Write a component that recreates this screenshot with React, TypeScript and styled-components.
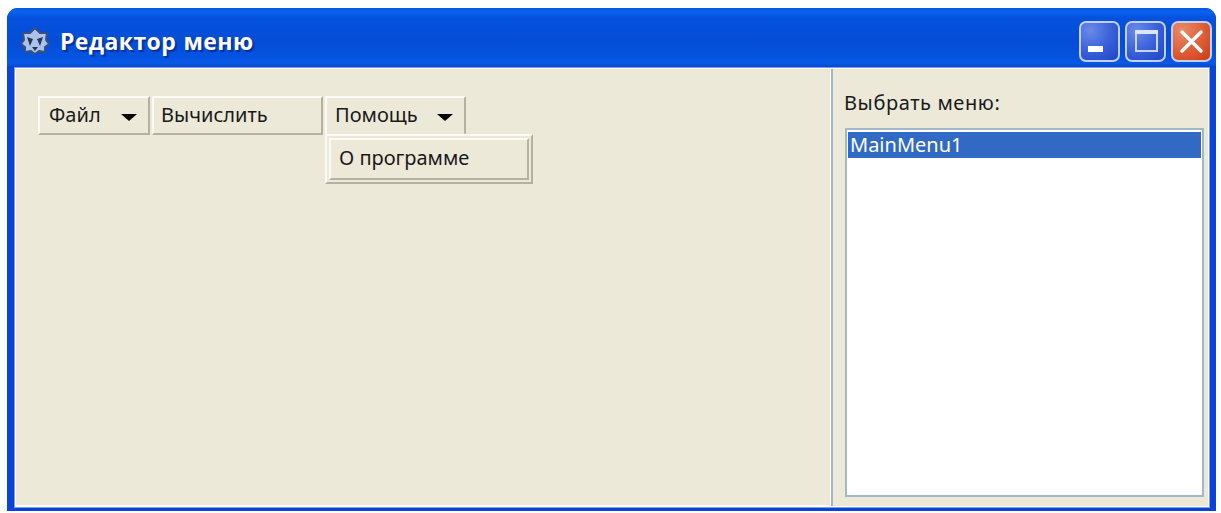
import React from "react";
import styled, { createGlobalStyle } from "styled-components";

const Page = createGlobalStyle`
  html, body { margin: 0; padding: 0; background: #fff; }
  body { font-family: "Noto Sans", "Open Sans", sans-serif; }
`;

const Screen = styled.div`
  width: 1221px;
  height: 513px;
  padding: 8px 5px 2px 7px;
  box-sizing: border-box;
  overflow: hidden;
`;

const Win = styled.div`
  height: 100%;
  display: flex;
  flex-direction: column;
  background: #0a42dc;
  border-radius: 11px 11px 0 0;
  overflow: hidden;
`;

const TitleBar = styled.div`
  height: 60px;
  flex: none;
  display: flex;
  align-items: center;
  padding: 6px 4px 0 13px;
  box-sizing: border-box;
  background: linear-gradient(
    180deg,
    #0a58e0 0%,
    #0a62ee 6%,
    #0552de 16%,
    #044dd6 55%,
    #0453e0 82%,
    #0a58e8 92%,
    #0444c4 100%
  );
`;

const AppGlyph = styled.svg`
  width: 30px;
  height: 30px;
  flex: none;
  margin-right: 10px;
`;

const Caption = styled.div`
  flex: 1;
  color: #fff;
  font-family: "Open Sans", "Noto Sans", sans-serif;
  font-weight: 700;
  font-size: 23px;
  letter-spacing: 0.4px;
  word-spacing: 1px;
  text-shadow: 2px 2px 1px #0a2f9c;
`;

const CaptionButtons = styled.div`
  display: flex;
  gap: 5px;
`;

const CaptionButton = styled.div<{ $danger?: boolean }>`
  width: 41px;
  height: 41px;
  box-sizing: border-box;
  border: 2px solid #c3d0f4;
  border-radius: 7px;
  display: flex;
  align-items: center;
  justify-content: center;
  background: ${(p) =>
    p.$danger
      ? "radial-gradient(circle at 25% 20%, #e88a68 0%, #e0603a 50%, #c93c12 100%)"
      : "radial-gradient(circle at 25% 20%, #6a8ae8 0%, #3a62da 50%, #1f44c6 100%)"};
`;

const ButtonGlyph = styled.svg`
  width: 31px;
  height: 31px;
  display: block;
`;

const Body = styled.div`
  flex: 1;
  min-height: 0;
  display: flex;
  margin: 1px 8px 5px 9px;
  background: #ece9d8;
  box-shadow: 0 0 0 1px #fff, 0 0 0 2px #7f9fe4;
`;

const Designer = styled.div`
  width: 817px;
  flex: none;
  box-sizing: border-box;
  padding: 27px 0 0 22px;
  border-right: 2px solid #a3b6cb;
  box-shadow: inset -1px -1px 0 #fff;
`;

const Toolbar = styled.div`
  display: flex;
  gap: 2px;
  align-items: flex-start;
`;

const MenuSlot = styled.div`
  position: relative;
`;

const MenuButton = styled.div<{ $w: number; $inset: number; $open?: boolean }>`
  width: ${(p) => p.$w}px;
  height: 39px;
  box-sizing: border-box;
  display: flex;
  align-items: center;
  justify-content: space-between;
  padding: 0 11px 3px ${(p) => p.$inset}px;
  font-size: 20px;
  color: #1a1a1a;
  background: #ece9d8;
  border-top: 2px solid #fbfaf5;
  border-left: 2px solid #fbfaf5;
  border-right: 2px solid #b4b1a3;
  border-bottom: 2px solid ${(p) => (p.$open ? "#ece9d8" : "#b4b1a3")};
`;

const Caret = styled.span`
  width: 0;
  height: 0;
  border-left: 8px solid transparent;
  border-right: 8px solid transparent;
  border-top: 7px solid #000;
  margin-top: 7px;
`;

const Dropdown = styled.div`
  position: absolute;
  left: 0;
  top: 38px;
  width: 208px;
  height: 50px;
  box-sizing: border-box;
  padding: 2px;
  background: #ece9d8;
  border-top: 2px solid #fbfaf5;
  border-left: 2px solid #fbfaf5;
  border-right: 2px solid #b4b1a3;
  border-bottom: 2px solid #b4b1a3;
`;

const DropdownItem = styled.div`
  height: 100%;
  box-sizing: border-box;
  display: flex;
  align-items: center;
  padding: 0 0 3px 8px;
  font-size: 20px;
  color: #1a1a1a;
  border-top: 2px solid #fbfaf5;
  border-left: 2px solid #fbfaf5;
  border-right: 2px solid #b4b1a3;
  border-bottom: 2px solid #b4b1a3;
`;

const Side = styled.div`
  flex: 1;
  min-width: 0;
  display: flex;
  flex-direction: column;
  padding: 0 4px 9px 12px;
`;

const SideLabel = styled.div`
  height: 59px;
  flex: none;
  display: flex;
  align-items: center;
  font-size: 20px;
  letter-spacing: 0.6px;
  color: #1a1a1a;
  padding: 8px 0 0 0;
  margin-left: -1px;
  box-sizing: border-box;
`;

const ListBox = styled.div`
  flex: 1;
  min-height: 0;
  background: #fff;
  border: 2px solid #a3b6cb;
  padding: 2px 1px;
`;

const ListRow = styled.div`
  height: 26px;
  background: #316ac5;
  color: #fff;
  font-size: 20px;
  line-height: 26px;
  padding-left: 2px;
`;

export default function App() {
  return (
    <Screen>
      <Page />
      <Win>
        <TitleBar>
          <AppGlyph viewBox="0 0 30 30">
            <path
              d="M15 2l5 5 7 0-1 7 3 4-4 3 0 5-6-1-4 3-4-3-6 1 0-5-4-3 3-4-1-7 7 0z"
              fill="#a9c3ee"
              stroke="#3d4f78"
              strokeWidth="2"
              strokeLinejoin="round"
            />
            <path d="M7 11l6 2-3 7zM23 11l-6 2 3 7z" fill="#2c3550" />
            <path d="M12 21h6l-3 4z" fill="#2c3550" />
          </AppGlyph>
          <Caption>Редактор меню</Caption>
          <CaptionButtons>
            <CaptionButton>
              <ButtonGlyph viewBox="0 0 31 31">
                <rect x="4" y="20" width="15" height="6" fill="#fff" />
              </ButtonGlyph>
            </CaptionButton>
            <CaptionButton>
              <ButtonGlyph viewBox="0 0 31 31">
                <rect x="6" y="5" width="21" height="20" fill="none" stroke="#c6d4f5" strokeWidth="2" />
                <rect x="5" y="4" width="23" height="4" fill="#dbe4fa" />
              </ButtonGlyph>
            </CaptionButton>
            <CaptionButton $danger>
              <ButtonGlyph viewBox="0 0 31 31">
                <path d="M6 6l19 19M25 6L6 25" stroke="#fff" strokeWidth="3.5" strokeLinecap="round" />
              </ButtonGlyph>
            </CaptionButton>
          </CaptionButtons>
        </TitleBar>
        <Body>
          <Designer>
            <Toolbar>
              <MenuSlot>
                <MenuButton $w={112} $inset={9}>
                  Файл <Caret />
                </MenuButton>
              </MenuSlot>
              <MenuSlot>
                <MenuButton $w={171} $inset={7}>Вычислить</MenuButton>
              </MenuSlot>
              <MenuSlot>
                <MenuButton $w={141} $inset={8} $open>
                  Помощь <Caret />
                </MenuButton>
                <Dropdown>
                  <DropdownItem>О программе</DropdownItem>
                </Dropdown>
              </MenuSlot>
            </Toolbar>
          </Designer>
          <Side>
            <SideLabel>Выбрать меню:</SideLabel>
            <ListBox>
              <ListRow>MainMenu1</ListRow>
            </ListBox>
          </Side>
        </Body>
      </Win>
    </Screen>
  );
}
